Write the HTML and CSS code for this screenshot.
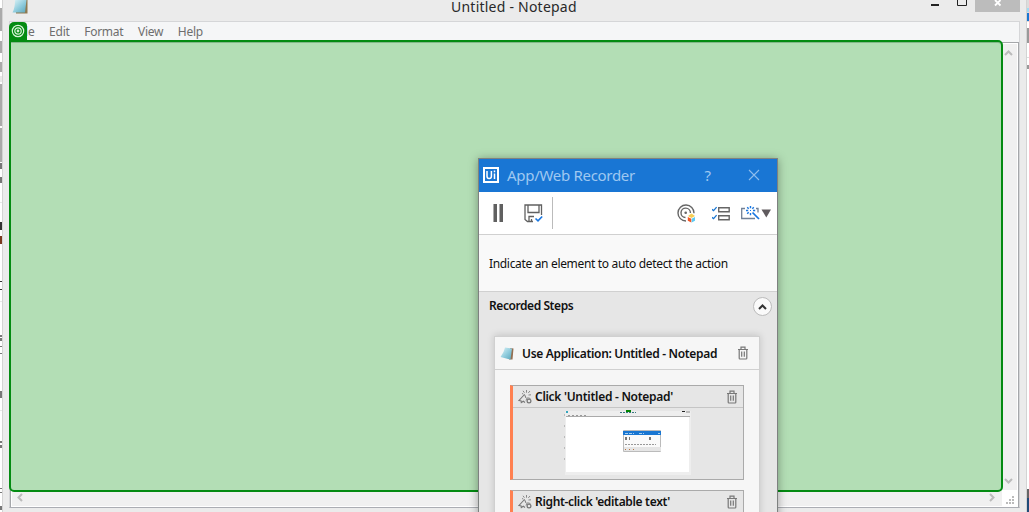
FILE: index.html
```
<!DOCTYPE html>
<html lang="en">
<head>
<meta charset="utf-8">
<title>Untitled - Notepad</title>
<link rel="stylesheet" href="styles.css">
</head>
<body>
<svg class="defs" width="0" height="0" aria-hidden="true">
  <defs>
    <linearGradient id="paper" x1="0" y1="0" x2="1" y2="1"><stop offset="0" stop-color="#dff4f7"/><stop offset=".55" stop-color="#8ecbdc"/><stop offset="1" stop-color="#5ba6bb"/></linearGradient>
    <symbol id="trash" viewBox="0 0 12 14"><path d="M1 3.500h10M4 3V1.200h4V3M2.200 3.500v8.700q0 .8.8.8h6q.8 0 .8-.8V3.500M4.700 5.500v5.200M7.300 5.500v5.200" fill="none" stroke="#777" stroke-width="1.200"/></symbol>
    <symbol id="click" viewBox="0 0 14 14"><path d="M6.500 4.500 1 10.500l2 .3.300 1.700 2-1.300 1.700 1.300" fill="none" stroke="#777" stroke-width="1.100"/><path d="M6.500 4.500 8 8" stroke="#777"/><path d="M8.500 0v2.700M5 .8l1.400 1.900M12 1l-1.700 1.900M10.500 5l2.500-.2M4 3.500l1.300.5" stroke="#888" fill="none"/><circle cx="11" cy="11" r="1.900" fill="none" stroke="#777" stroke-width="1.200"/><path d="M8 10.500 9 8h2.500l1 1.500" fill="none" stroke="#888"/></symbol>
  </defs>
</svg>
<main class="desktop">
  <svg class="behind" width="1029" height="512" viewBox="0 0 1029 512">
    <path fill="#aaa" d="M0 8h2v23H0zM0 41h2v12H0zM0 62h2v10H0zM0 84h2v42H0zM0 128h2v34H0z"/>
    <path fill="#e8e8e8" d="M0 76h2v6H0zM0 202h2v1H0zM0 301h2v1H0zM0 410h2v1H0z"/>
    <path fill="#777" d="M0 163h2v6H0zM0 177h2v6H0zM0 335h2v2H0zM0 338h2v3H0zM0 346h2v1H0zM0 353h2v1H0zM0 391h2v7H0zM0 441h2v2H0zM0 445h2v3H0zM0 488h2v1H0zM0 492h2v1H0zM0 506h2v4H0z"/>
    <path fill="#333" d="M0 222h2v8H0zM0 281h2v1H0zM0 289h2v1H0z"/><path fill="#7b391f" d="M0 236h2v8H0z"/>
    <path fill="#dcdcdc" d="M1027 0h2v512h-2z"/><path fill="#fff" d="M1027 22h2v478h-2z"/><path fill="#9edaf3" d="M1027 8h2v4h-2z"/><path fill="#1976d2" d="M1027 13h2v8h-2z"/><path fill="#999" d="M1027 28h2v15h-2zM1027 65h2v4h-2z"/><path fill="#ddd" d="M1027 57h2v1h-2z"/><path fill="#666" d="M1027 489h2v9h-2z"/><path fill="#204b78" d="M1027 498h2v14h-2z"/>
  </svg>

  <section class="notepad">
    <header class="np-title">
      <svg class="np-icon" width="18" height="14" viewBox="0 0 18 14"><path d="M4 0h11.500v13.500H4z" fill="#8e7950"/><path d="M4 0h10.500L13 12.500H.500Q3 8 3 0Z" fill="url(#paper)"/></svg>
      <span class="np-name">Untitled - Notepad</span>
      <svg class="np-controls" width="89" height="12" viewBox="0 0 89 12"><path d="M0 4h8v2H0z" fill="#222"/><path d="M26.500 0v5.500h9V0" fill="none" stroke="#222"/><path d="M44 0h45v12H44z" fill="#bcbcbc"/><path d="m64 0 5.500 5.500M69.500 0 64 5.500" stroke="#fff" stroke-width="1.800"/></svg>
    </header>
    <div class="np-body">
      <nav class="menu"><span>File</span><span>Edit</span><span>Format</span><span>View</span><span>Help</span></nav>
      <div class="client">
        <div class="canvas"></div>
        <div class="vscroll">
          <svg width="9" height="6" viewBox="0 0 9 6"><path d="m1 5 3.500-3.500L8 5" fill="none" stroke="#bbb" stroke-width="2"/></svg>
          <svg width="9" height="6" viewBox="0 0 9 6"><path d="m1 1 3.500 3.500L8 1" fill="none" stroke="#bbb" stroke-width="2"/></svg>
        </div>
        <div class="hscroll">
          <svg width="6" height="9" viewBox="0 0 6 9"><path d="M5 1 1.500 4.500 5 8" fill="none" stroke="#bbb" stroke-width="2"/></svg>
          <svg width="6" height="9" viewBox="0 0 6 9"><path d="m1 1 3.500 3.500L1 8" fill="none" stroke="#bbb" stroke-width="2"/></svg>
        </div>
        <svg class="grip" width="8" height="8" viewBox="0 0 8 8"><path d="M6 0h2v2H6zM3 3h2v2H3zM6 3h2v2H6zM0 6h2v2H0zM3 6h2v2H3zM6 6h2v2H6z" fill="#bbb"/></svg>
      </div>
    </div>
  </section>

  <div class="highlight"></div>
  <div class="target"><svg width="14" height="14" viewBox="0 0 14 14" fill="none" stroke="#d9f3d9" stroke-width="1.200"><circle cx="7" cy="7" r="5.700"/><circle cx="7" cy="7" r="3.200"/><circle cx="7" cy="7" r=".8"/></svg></div>

  <section class="recorder">
    <header class="rec-title">
      <svg class="ui-logo" width="16" height="16" viewBox="0 0 16 16"><path d="M1 1h14v14H1z" fill="none" stroke="#fff" stroke-width="2"/><path d="M4 4v5.200q0 2.300 2.200 2.300t2.200-2.300V4M11.500 6.500V12M11.500 3.500v1.700" stroke="#fff" stroke-width="1.500" fill="none"/></svg>
      <span class="rec-name">App/Web Recorder</span>
      <span class="help">?</span>
      <svg class="close" width="12" height="12" viewBox="0 0 12 12"><path d="m1 1 10 10M11 1 1 11" stroke="#8fbdec" stroke-width="1.100"/></svg>
    </header>
    <div class="toolbar">
      <svg class="pause" width="10" height="18" viewBox="0 0 10 18"><path d="M0 0h1v18H0zM6 0h1v18H6z" fill="#aaa"/><path d="M1 0h3v18H1zM7 0h3v18H7z" fill="#606060"/></svg>
      <svg class="save" width="19" height="19" viewBox="0 0 19 19" fill="none"><path d="M9 17.500H3.500l-2.500-2V1h16.500v10M4 1v7.500h11V1M5 17v-4.500h5M7.500 17v-2" stroke="#606060" stroke-width="1.300"/><path d="m11.500 14.500 2.500 2.300 4.200-4.300" stroke="#1976e0" stroke-width="1.600"/></svg>
      <i class="divider"></i>
      <svg class="cv" width="18" height="19" viewBox="0 0 18 19" fill="none"><path d="M9 17A8 8 0 1 1 17 9.200M8.500 13.500A4.700 4.700 0 1 1 13.400 9" stroke="#666" stroke-width="1.400"/><circle cx="8.700" cy="8.800" r="1.300" fill="#666"/><path d="m11 12 3.500-2.500 3.500 2.500-3.500 1.900Z" fill="#f6ce55"/><path d="m10.800 13 3.500 1.800V18.500L10.800 16.800Z" fill="#f45422"/><path d="m18 13-3.300 1.800v3.700l3.300-1.700Z" fill="#5ccbf4"/></svg>
      <svg class="list" width="18" height="15" viewBox="0 0 18 15" fill="none"><path d="M6.700 1.700h10.500v4H6.700zM6.700 9.700h10.500v4H6.700z" stroke="#666" stroke-width="1.400"/><path d="m0 3.300 1.600 1.400 3-3.500M0 11.300l1.600 1.400 3-3.500" stroke="#1976d2" stroke-width="1.300"/></svg>
      <svg class="wand" width="30" height="14" viewBox="0 0 30 14" fill="none"><path d="M4 2.500H.700v10H14M15 2.500h2v4" stroke="#718096" stroke-width="1.300"/><path d="M9.500 0v2.200M9.500 7v2.200M5 4.500h2.200M12 4.500h2.200M6.200 1.200l1.500 1.500M12.800 1.200l-1.500 1.500M6.200 7.800l1.500-1.500" stroke="#1976e0" stroke-width="1.400"/><path d="m11.500 6.500 6.500 6.500" stroke="#1976e0" stroke-width="1.700"/><path d="M9 4h1v1H9z" fill="#1976e0"/><path d="M20.500 3.500h9.500l-4.700 8Z" fill="#605b5e"/></svg>
    </div>
    <p class="message">Indicate an element to auto detect the action</p>
    <div class="steps">
      <div class="steps-head"><h2>Recorded Steps</h2><button class="toggle" aria-label="Collapse"><svg width="9" height="6" viewBox="0 0 9 6"><path d="M1 5 4.500 1.500 8 5" fill="none" stroke="#333" stroke-width="2"/></svg></button></div>
      <div class="card">
        <div class="card-head"><svg width="15" height="14" viewBox="0 0 15 14"><path d="m10 2 3.500.500-1 11H9z" fill="#947052"/><path d="m5 1.500 7 1-1.500 11L.500 11Q4 6.500 5 1.500Z" fill="url(#paper)"/></svg><b class="app-name">Use Application: Untitled - Notepad</b><svg class="bin" width="12" height="14"><use href="#trash"/></svg></div>
        <div class="card-body">
          <article class="step">
            <div class="step-head"><svg width="14" height="14"><use href="#click"/></svg><b class="click-name">Click 'Untitled - Notepad'</b><svg class="bin" width="12" height="14"><use href="#trash"/></svg></div>
            <div class="preview">
              <svg width="128" height="66" viewBox="0 0 128 66"><path d="M1 1h126v64H1z" fill="#eee"/><path d="M2 7h123v55H2z" fill="#fff"/><path d="M2 6.500h124" stroke="#aaa"/><path d="M2 2h2" stroke="#35a5bd" stroke-width="2"/><path d="M4 5.500h20" stroke="#999" stroke-dasharray="2 2"/><path d="M56 2.500h16" stroke="#3b7880" stroke-dasharray="2 1"/><path d="M62 1h5" stroke="#008500" stroke-width="2"/><path d="M118 1.500h3" stroke="#222"/><path d="M122 1h4v2h-4z" fill="#bbb"/><path d="M125.500 8v54" stroke="#eee"/><path d="M.500 4v55" stroke="#bbb" stroke-dasharray="2 9"/><path d="M59.500 20.500h37v21h-37z" fill="#fafafa" stroke="#bbb"/><path d="M59 21h38v4H59z" fill="#1976d2"/><path d="M61 23.500h9M75 23.500h5M94 23.500h2" stroke="#a5cef0" stroke-dasharray="3 1"/><path d="M61 28.500h2M65 28.500h1M85 28.500h2" stroke="#777" stroke-width="3"/><path d="M61 34.500h31" stroke="#999" stroke-dasharray="2 1"/><path d="M60 37h37v4H60z" fill="#e5e5e5"/><path d="M61 39.500h9" stroke="#ba7540" stroke-dasharray="1 3"/></svg>
            </div>
          </article>
          <article class="step">
            <div class="step-head"><svg width="14" height="14"><use href="#click"/></svg><b class="right-name">Right-click 'editable text'</b><svg class="bin" width="12" height="14"><use href="#trash"/></svg></div>
            <div class="preview"></div>
          </article>
        </div>
      </div>
    </div>
  </section>
</main>
</body>
</html>
```
FILE: styles.css
```
* { box-sizing: border-box; }
body { margin: 0; overflow: hidden; font-family: "Noto Sans", "Open Sans", sans-serif; }
svg { display: block; flex: none; }
.defs { position: absolute; }
.desktop { position: relative; width: 1029px; height: 512px; overflow: hidden; background: #fff; }
.behind { position: absolute; inset: 0; }
.notepad { position: absolute; left: 2px; top: 0; width: 1025px; height: 512px; padding: 0 6px; background: #ebebeb; border: solid #d3d3d3; border-width: 0 1px; }
.np-title { height: 21px; display: flex; align-items: flex-start; }
.np-icon { margin-left: 3px; }
.np-name { width: 128px; margin-left: 421px; font-size: 14px; line-height: 14px; letter-spacing: .23px; color: #292929; white-space: nowrap; }
.np-controls { margin-left: auto; }
.np-body { height: 487px; display: flex; flex-direction: column; border: 1px solid #d5d6d8; border-bottom-color: #abadb3; background: #f5f6f7; }
.menu { height: 20px; display: flex; gap: 14.6px; padding-left: 6.3px; font-size: 12px; line-height: 20px; letter-spacing: -.25px; color: #6e6e6e; }
.client { flex: 1; display: grid; grid-template: 1fr 17px / 1fr 16px; border: 1px solid #a5a7aa; border-bottom: 0; background: #fff; }
.vscroll { background: #f0f0f0; display: flex; flex-direction: column; justify-content: space-between; align-items: center; padding: 6px 3px 6px 0; margin: 1px 1px 0 0; }
.hscroll { background: #f0f0f0; display: flex; justify-content: space-between; align-items: center; padding: 0 7px 2px 5px; margin: 0 0 1px 1px; }
.grip { justify-self: end; align-self: end; margin: 0 4px 3px 0; }
.highlight { position: absolute; left: 9px; top: 40px; width: 994px; height: 452px; background: #b3deb5; border: 2px solid #048b12; border-radius: 0 5px 5px 5px; box-shadow: inset 0 1px #83b889; }
.target { position: absolute; left: 9px; top: 22px; width: 18px; height: 19px; background: #048b12; border-radius: 5px 4px 0 0; padding: 2px; }
.recorder { position: absolute; left: 478px; top: 158px; width: 300px; height: 380px; border: 1px solid #7e8180; background: #e6e6e6; box-shadow: 0 1px 9px rgba(0, 0, 0, .35); }
.rec-title { height: 33px; display: flex; align-items: center; padding: 0 17px 2px 4px; background: #1976d4; color: #9fc8f1; }
.rec-name { width: 129px; margin-left: 8px; font-size: 15px; line-height: 20px; letter-spacing: -.3px; white-space: nowrap; }
.help { margin-left: auto; font-size: 15px; line-height: 20px; }
.close { margin-left: 37px; }
.toolbar { height: 43px; display: flex; align-items: center; padding: 0 6px 0 14px; background: #fff; border-bottom: 1px solid #d0d0d0; }
.save { margin-left: 21px; }
.divider { width: 1px; height: 32px; margin-left: 9px; background: #bbb; }
.cv { margin-left: auto; }
.list { margin-left: 17px; }
.wand { margin-left: 11px; }
.message { height: 56px; margin: 0; padding-left: 10px; background: #f9f9f9; color: #111; font-size: 12px; line-height: 57px; letter-spacing: -.33px; white-space: nowrap; }
.steps { border-top: 1px solid #d0d0d0; padding: 0 17px 0 15px; }
.steps-head { height: 29px; display: flex; align-items: center; justify-content: space-between; margin: 0 -12px 0 -5px; }
h2, .card b { font-size: 12px; font-weight: 600; letter-spacing: -.32px; color: #111; white-space: nowrap; }
h2 { margin: 0; padding-bottom: 2px; letter-spacing: -.43px; }
.toggle { width: 19px; height: 19px; display: flex; align-items: center; justify-content: center; padding: 0; border: 1px solid #bbb; border-radius: 50%; background: #fafafa; }
.card { height: 200px; margin-top: 15px; border: 1px solid #d0d0d0; background: #f6f6f6; box-shadow: 0 -1px 7px rgba(0, 0, 0, .15); }
.card-head { height: 33px; display: flex; align-items: center; padding: 0 10px 0 5px; border-bottom: 1px solid #d0d0d0; }
.card-head b { margin-left: 7px; }
.bin { margin-left: auto; }
.card-body { padding: 15px; display: flex; flex-direction: column; gap: 10px; }
.step { height: 95px; border: 1px solid #aaa; border-left: 3px solid #ff8050; background: #e6e6e6; }
.step-head { height: 22px; display: flex; align-items: center; padding: 0 5px; border-bottom: 1px solid #c5c5c5; }
.step-head b { margin-left: 3px; }
.step-head .click-name { letter-spacing: -.28px; }
.preview { padding: 2px 0 0 51px; }
```
